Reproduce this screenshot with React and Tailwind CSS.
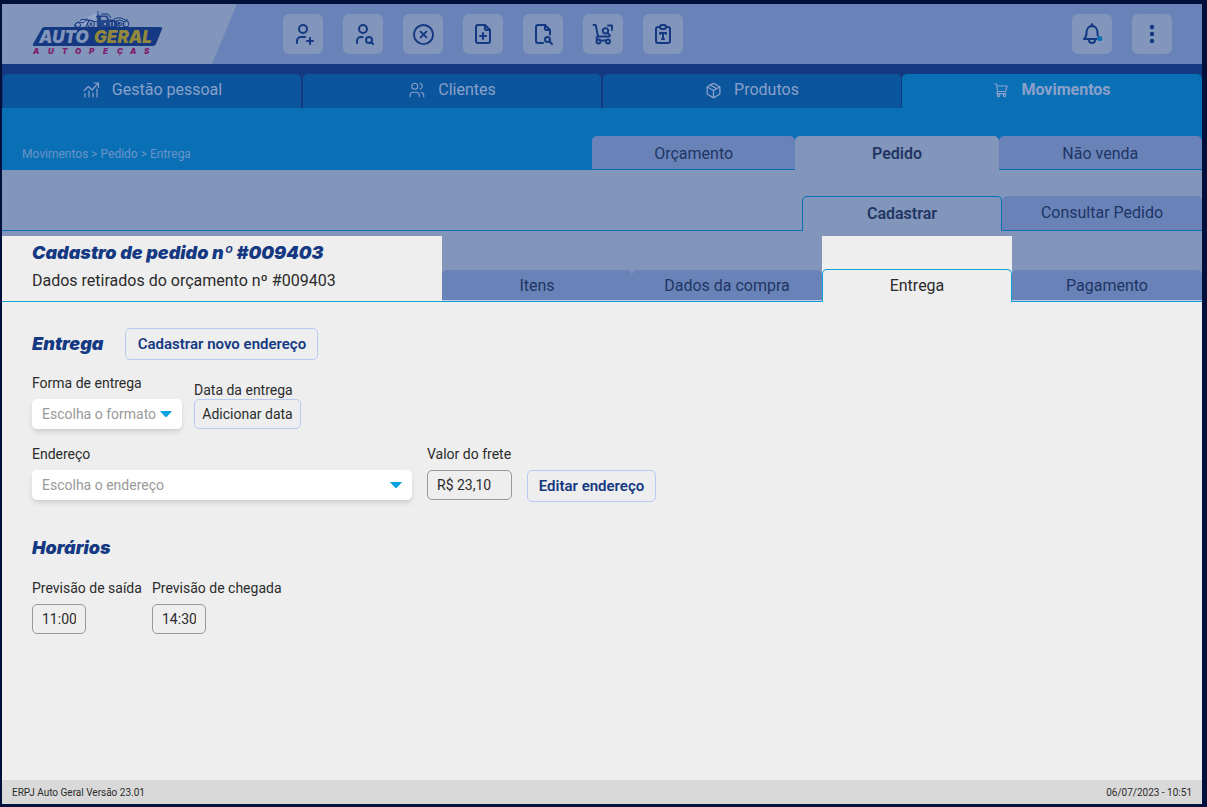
import { CircleX, Package } from "lucide-react";
import {
  TbUserPlus,
  TbUserSearch,
  TbFilePlus,
  TbFileSearch,
  TbClipboardTypography,
  TbUsers,
} from "react-icons/tb";

function CartSearchIcon() {
  return (
    <svg width="24" height="24" viewBox="0 0 24 24" fill="none" stroke="currentColor" strokeWidth="1.900" strokeLinecap="round" strokeLinejoin="round" aria-hidden="true">
      <path d="M2.500 3h2.200L7 14.500h11.500" />
      <path d="M7 14.500C5 15 5 17.800 7 18" />
      <circle cx="7.500" cy="19.500" r="2" />
      <circle cx="17" cy="19.500" r="2" />
      <path d="M9.500 18.500H15" />
      <circle cx="14.500" cy="8.800" r="2.700" />
      <path d="M16.500 10.800 19 13.300M17 3.500h4V8" />
    </svg>
  );
}

function BellIcon() {
  return (
    <svg width="24" height="24" viewBox="0 0 24 24" fill="none" aria-hidden="true">
      <path d="M4 17c1.800-1.500 2.500-3 2.500-6 0-4 2-7 5.500-7s5.500 3 5.500 7c0 1.200 .1 2 .3 2.800M4 17h12.500" stroke="currentColor" strokeWidth="2" strokeLinecap="round" strokeLinejoin="round" />
      <path d="M9 18a3 3 0 0 0 6 0" stroke="currentColor" strokeWidth="2" />
      <path d="M12 2.500v1.500" stroke="currentColor" strokeWidth="2.400" strokeLinecap="round" />
      <circle cx="19.700" cy="16.500" r="2.600" fill="#0a70b5" />
    </svg>
  );
}

function DotsIcon() {
  return (
    <svg width="24" height="24" viewBox="0 0 24 24" fill="currentColor" aria-hidden="true">
      <circle cx="12" cy="5" r="2.200" />
      <circle cx="12" cy="12" r="2.200" />
      <circle cx="12" cy="19" r="2.200" />
    </svg>
  );
}

function ChartIcon() {
  return (
    <svg width="18" height="18" viewBox="0 0 18 18" fill="none" stroke="currentColor" strokeWidth="1.200" strokeLinecap="round" strokeLinejoin="round" aria-hidden="true">
      <path d="M3 16v-3.500M7 16v-6M11 16v-4M15 16V8" />
      <path d="M2 9.500l4.500-4 3.500 3.500L16 2.500M12 2h4.500v4.500" />
    </svg>
  );
}

function CartIcon() {
  return (
    <svg width="16" height="16" viewBox="0 0 16 16" fill="none" stroke="currentColor" strokeWidth="1.200" strokeLinecap="round" strokeLinejoin="round" aria-hidden="true">
      <path d="M1.500 2h2l1.200 7.500h7.800l1.500-5.500H3.800M4.700 9.500c-1.500.5-1.200 2.200 0 2.200h8" />
      <circle cx="5.500" cy="13.500" r="1.200" />
      <circle cx="11.500" cy="13.500" r="1.200" />
    </svg>
  );
}

function Logo() {
  return (
    <svg width="132" height="48" viewBox="0 0 132 48" role="img" aria-label="Auto Geral Autopeças">
      <path d="M42 13 64 3v12H44z" fill="#93a5c9" />
      <g fill="none" stroke="#143982" strokeWidth="1">
        <path d="M43 17c-1-3 1-5 5-5l3 1c2-3 6-4 9-2l5 1M48 10l8-1M66 17V5M64 7l2-1M69 4h7l3 4M78 11h7l3 3M82 9c5-2 9-1 11 1h3M84 12l4 5M54 17l3-7" />
        <circle cx="46" cy="15" r="2.500" />
        <circle cx="59" cy="14" r="3.500" />
        <circle cx="59" cy="14" r="1.200" />
        <circle cx="88" cy="14" r="4" />
        <circle cx="88" cy="14" r="1.500" />
        <circle cx="94" cy="14" r="3" />
      </g>
      <path d="M66 1v5M66 6h9l2 4h5l3 3v4H66z" fill="#143982" stroke="#143982" strokeWidth="1" opacity=".85" />
      <path d="M69 7h5l1 3h-6zM72 13h2v2h-2zM78 12h1v4h-1zM81 12h1v4h-1z" fill="#8295ba" />
      <path d="M13 17h115q3 0 2 2l-6 15q-1 2-3 2H3q-3 0-2-2l8-14q1-3 4-3z" fill="#143982" />
      <g fontFamily="Inter, sans-serif" fontSize="17" fontWeight="900" fontStyle="italic">
        <text x="7" y="33" fill="#8295ba">AUTO</text>
        <text x="62" y="33" fill="#91883e">GERAL</text>
      </g>
      <g fontFamily="Inter, sans-serif" fontSize="8" fontWeight="900" fontStyle="italic" fill="#7d2070">
        <text x="1 16 30 43 57 71 85 98 112" y="44">AUTOPEÇAS</text>
      </g>
    </svg>
  );
}

const actions = [
  { label: "Adicionar cliente", icon: <TbUserPlus size={24} /> },
  { label: "Buscar cliente", icon: <TbUserSearch size={24} /> },
  { label: "Cancelar", icon: <CircleX size={23} strokeWidth={2} /> },
  { label: "Novo documento", icon: <TbFilePlus size={24} /> },
  { label: "Buscar documento", icon: <TbFileSearch size={24} /> },
  { label: "Buscar venda", icon: <CartSearchIcon /> },
  { label: "Relatório", icon: <TbClipboardTypography size={24} /> },
];

function IconButton({ label, children }) {
  return (
    <button type="button" aria-label={label} className="flex size-10 items-center justify-center rounded-md bg-[#8295ba] text-[#143982]">
      {children}
    </button>
  );
}

const sections = [
  { label: "Gestão pessoal", icon: <ChartIcon /> },
  { label: "Clientes", icon: <TbUsers size={18} strokeWidth={1.5} /> },
  { label: "Produtos", icon: <Package size={17} strokeWidth={1.8} /> },
  { label: "Movimentos", icon: <CartIcon />, active: true },
];

function Caret() {
  return (
    <svg className="pointer-events-none absolute right-2.5 top-1/2 -translate-y-1/2" width="12" height="8" viewBox="1 0 12 8" aria-hidden="true">
      <path d="M2 1h10q1 0 .5.800L8 6.500q-1 1-2 0L1.500 1.800Q1 1 2 1z" fill="#0ba1e2" />
    </svg>
  );
}

function Select({ id, label, placeholder, width }) {
  return (
    <div className={`flex flex-col gap-1 ${width}`}>
      <label htmlFor={id} className="text-sm leading-6">{label}</label>
      <div className="relative">
        <select id={id} defaultValue="" className="block h-[30px] w-full appearance-none rounded-[5px] bg-white pl-2.5 pr-5 text-sm text-[#999] shadow-md shadow-black/10">
          <option value="">{placeholder}</option>
        </select>
        <Caret />
      </div>
    </div>
  );
}

function Field({ id, label, value, column, width }) {
  return (
    <div className={`flex flex-col gap-1 ${column}`}>
      <label htmlFor={id} className="whitespace-nowrap text-sm leading-6">{label}</label>
      <input id={id} defaultValue={value} className={`h-[30px] rounded-[5px] border border-[#999] bg-transparent px-[9px] text-sm ${width}`} />
    </div>
  );
}

const outline = "rounded-[5px] border border-[#b9c9f2]";
const heading = "font-[Inter,sans-serif] text-lg font-black italic leading-6 text-[#143982]";
const tab = "flex items-center justify-center text-base rounded-t-[5px]";
const idleTab = "border-b border-[#0a70b5] bg-[#6983b9]";
const idleStep = "h-8 border-b border-[#12a0d2] bg-[#6983b9] shadow-[inset_0_-1px_0_#c3cfee]";

export default function App() {
  return (
    <div className="min-h-screen bg-[#00103a] pb-[3px] pl-0.5 pr-[5px] pt-1 font-[Roboto,sans-serif] text-[#2b2b2b]">
      <div className="flex min-h-[calc(100vh-7px)] flex-col bg-[#eee]">
        <header className="flex h-[60px] items-center bg-[#6983b9] pr-[30px]">
          <a href="#inicio" className="flex h-full w-[235px] items-center bg-[#8295ba] pl-[30px] [clip-path:polygon(0_0,100%_0,210px_100%,0_100%)]">
            <Logo />
          </a>
          <div className="ml-[46px] flex gap-5">
            {actions.map((a) => (
              <IconButton key={a.label} label={a.label}>{a.icon}</IconButton>
            ))}
          </div>
          <div className="ml-auto flex gap-5">
            <IconButton label="Notificações"><BellIcon /></IconButton>
            <IconButton label="Mais opções"><DotsIcon /></IconButton>
          </div>
        </header>

        <nav className="grid grid-cols-4 bg-[#143982] pt-2.5">
          {sections.map((s) => (
            <a
              key={s.label}
              href="#secao"
              className={`flex h-[34px] items-center justify-center gap-3 rounded-t-[5px] pb-0.5 text-base ${s.active ? "bg-[#0a70b5] font-bold text-[#8aa0cb]" : "mx-px bg-[#0b559c] text-[#8aa0cb]"}`}
            >
              {s.icon}
              {s.label}
            </a>
          ))}
        </nav>

        <div className="flex items-end bg-[#0a70b5] pt-7">
          <p className="flex h-[34px] flex-1 items-center pl-5 pt-0.5 text-xs text-[#6b93c8]">Movimentos &gt; Pedido &gt; Entrega</p>
          <nav className="grid h-[34px] w-[610px] grid-cols-3 text-[#1f3563]">
            <a href="#orcamento" className={`${tab} ${idleTab} pt-0.5`}>Orçamento</a>
            <a href="#pedido" className={`${tab} bg-[#8295ba] pt-0.5 font-semibold`}>Pedido</a>
            <a href="#nao-venda" className={`${tab} ${idleTab} pt-0.5`}>Não venda</a>
          </nav>
        </div>

        <div className="flex items-end bg-[#8295ba] pt-[26px] text-[#1f3563]">
          <div className="h-[35px] flex-1 border-b border-[#0a70b5]" />
          <nav className="grid h-[35px] w-[400px] grid-cols-2">
            <a href="#cadastrar" className={`${tab} border-x border-t border-[#0a70b5] font-semibold`}>Cadastrar</a>
            <a href="#consultar" className={`${tab} ${idleTab}`}>Consultar Pedido</a>
          </nav>
        </div>

        <div className="flex bg-[#8295ba] pt-[5px]">
          <div className="flex flex-1 flex-col border-b border-[#12a0d2] bg-[#eee] pb-2 pl-[30px] pt-[5px]">
            <h1 className={heading}>Cadastro de pedido nº #009403</h1>
            <p className="pt-1 text-base">Dados retirados do orçamento nº #009403</p>
          </div>
          <nav className="grid h-[66px] w-[760px] grid-cols-4 items-end text-[#1f3563]">
            <a href="#itens" className={`${tab} ${idleStep}`}>Itens</a>
            <a href="#dados" className={`${tab} ${idleStep}`}>Dados da compra</a>
            <div className="flex h-full items-end bg-[#eee]">
              <a href="#entrega" className={`${tab} h-[33px] w-full border-x border-t border-[#12a0d2] text-[#2b2b2b]`}>Entrega</a>
            </div>
            <a href="#pagamento" className={`${tab} ${idleStep}`}>Pagamento</a>
          </nav>
        </div>

        <main className="flex-1 px-[30px] pt-[26px]">
          <div className="flex items-center gap-[22px]">
            <h2 className={heading}>Entrega</h2>
            <button type="button" className={`${outline} h-8 w-[193px] text-[15px] font-semibold text-[#143982]`}>Cadastrar novo endereço</button>
          </div>

          <div className="mt-[11px] flex items-end gap-3">
            <Select id="forma" label="Forma de entrega" placeholder="Escolha o formato" width="w-[150px]" />
            <div className="flex flex-col">
              <label htmlFor="data" className="text-sm leading-[18px]">Data da entrega</label>
              <button id="data" type="button" className={`${outline} h-[30px] w-[107px] text-sm`}>Adicionar data</button>
            </div>
          </div>

          <div className="mt-[13px] flex items-start gap-[15px]">
            <Select id="endereco" label="Endereço" placeholder="Escolha o endereço" width="w-[380px]" />
            <Field id="frete" label="Valor do frete" value="R$ 23,10" column="w-[85px]" width="w-full" />
            <button type="button" className={`${outline} mt-7 h-8 w-[129px] text-[15px] font-semibold text-[#143982]`}>Editar endereço</button>
          </div>

          <h2 className={`${heading} mt-[34px]`}>Horários</h2>
          <div className="mt-4 flex gap-[15px]">
            <Field id="saida" label="Previsão de saída" value="11:00" column="w-[105px]" width="w-[54px]" />
            <Field id="chegada" label="Previsão de chegada" value="14:30" column="w-[130px]" width="w-[54px]" />
          </div>
        </main>

        <footer className="flex h-6 items-center justify-between bg-[#d9d9d9] px-2.5 text-[10px]">
          <span>ERPJ Auto Geral Versão 23.01</span>
          <time dateTime="2023-07-06T10:51">06/07/2023 - 10:51</time>
        </footer>
      </div>
    </div>
  );
}
